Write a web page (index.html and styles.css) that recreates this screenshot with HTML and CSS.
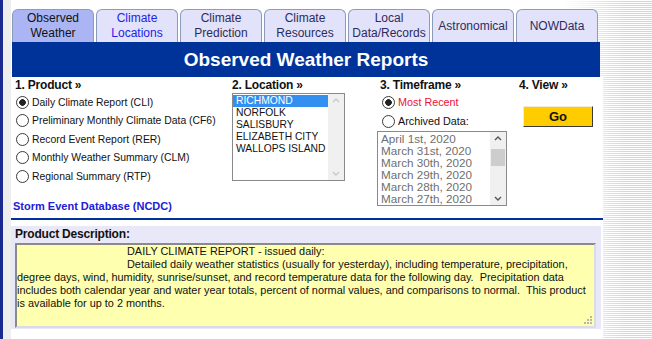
FILE: index.html
```html
<!DOCTYPE html>
<html lang="en">
<head>
  <meta charset="UTF-8">
  <title>Observed Weather Reports</title>
  <link rel="stylesheet" href="styles.css">
</head>
<body>
  <div class="frame">
    <div class="edge"></div>
    <div class="gutter"></div>
    <div class="page">
      <!-- Tab row -->
      <nav class="tabs">
        <a class="tab active">Observed<br>Weather</a>
        <a class="tab fresh">Climate<br>Locations</a>
        <a class="tab">Climate<br>Prediction</a>
        <a class="tab">Climate<br>Resources</a>
        <a class="tab">Local<br>Data/Records</a>
        <a class="tab">Astronomical</a>
        <a class="tab">NOWData</a>
      </nav>

      <div class="banner">Observed Weather Reports</div>

      <div class="main">
        <form class="picker">
          <!-- 1. Product -->
          <div class="col col-product">
            <div class="step">1. Product &raquo;</div>
            <label class="opt"><input type="radio" class="radio" name="product" checked>Daily Climate Report (CLI)</label>
            <label class="opt"><input type="radio" class="radio" name="product">Preliminary Monthly Climate Data (CF6)</label>
            <label class="opt"><input type="radio" class="radio" name="product">Record Event Report (RER)</label>
            <label class="opt"><input type="radio" class="radio" name="product">Monthly Weather Summary (CLM)</label>
            <label class="opt"><input type="radio" class="radio" name="product">Regional Summary (RTP)</label>
            <a class="storm">Storm Event Database (NCDC)</a>
          </div>

          <!-- 2. Location -->
          <div class="col col-location">
            <div class="step">2. Location &raquo;</div>
            <div class="listbox loc-list">
              <div class="items">
                <div class="item selected">RICHMOND</div>
                <div class="item">NORFOLK</div>
                <div class="item">SALISBURY</div>
                <div class="item">ELIZABETH CITY</div>
                <div class="item">WALLOPS ISLAND</div>
              </div>
              <div class="scroll disabled">
                <svg class="arrow" width="16" height="12" viewBox="0 0 16 12"><polyline points="5,8 8,5 11,8" fill="none" stroke="currentColor" stroke-width="1.4"/></svg>
                <div class="track"></div>
                <svg class="arrow" width="16" height="12" viewBox="0 0 16 12"><polyline points="5,4 8,7 11,4" fill="none" stroke="currentColor" stroke-width="1.4"/></svg>
              </div>
            </div>
          </div>

          <!-- 3. Timeframe -->
          <div class="col col-time">
            <div class="step">3. Timeframe &raquo;</div>
            <label class="opt"><input type="radio" class="radio" name="time" checked><span class="recent">Most Recent</span></label>
            <label class="opt opt-archive"><input type="radio" class="radio" name="time">Archived Data:</label>
            <div class="listbox date-list">
              <div class="items">
                <div class="item">April 1st, 2020</div>
                <div class="item">March 31st, 2020</div>
                <div class="item">March 30th, 2020</div>
                <div class="item">March 29th, 2020</div>
                <div class="item">March 28th, 2020</div>
                <div class="item">March 27th, 2020</div>
              </div>
              <div class="scroll">
                <svg class="arrow" width="16" height="12" viewBox="0 0 16 12"><polyline points="5,8 8,5 11,8" fill="none" stroke="currentColor" stroke-width="1.4"/></svg>
                <div class="track"><div class="thumb"></div></div>
                <svg class="arrow" width="16" height="12" viewBox="0 0 16 12"><polyline points="5,4 8,7 11,4" fill="none" stroke="currentColor" stroke-width="1.4"/></svg>
              </div>
            </div>
          </div>

          <!-- 4. View -->
          <div class="col col-view">
            <div class="step">4. View &raquo;</div>
            <button type="button" class="go">Go</button>
          </div>
        </form>

        <div class="desc">
          <div class="desc-title">Product Description:</div>
          <div class="desc-box">
            <span class="line indent">DAILY CLIMATE REPORT - issued daily:</span>
            <span class="line indent">Detailed daily weather statistics (usually for yesterday), including temperature, precipitation,</span>
            <span class="line">degree days, wind, humidity, sunrise/sunset, and record temperature data for the following day.  Precipitation data</span>
            <span class="line">includes both calendar year and water year totals, percent of normal values, and comparisons to normal.  This product</span>
            <span class="line">is available for up to 2 months.</span>
            <svg class="grip" width="10" height="10" viewBox="0 0 10 10">
              <rect x="7" y="1" width="2" height="2" fill="#b8b8a0"/>
              <rect x="4" y="4" width="2" height="2" fill="#b8b8a0"/>
              <rect x="7" y="4" width="2" height="2" fill="#b8b8a0"/>
              <rect x="1" y="7" width="2" height="2" fill="#b8b8a0"/>
              <rect x="4" y="7" width="2" height="2" fill="#b8b8a0"/>
              <rect x="7" y="7" width="2" height="2" fill="#b8b8a0"/>
            </svg>
          </div>
        </div>
      </div>
    </div>
  </div>
</body>
</html>
```

FILE: styles.css
```css
body {
  margin: 0;
  font-family: "Liberation Sans", Arial, sans-serif;
  color: #111;
  background:
    linear-gradient(to right, #fff 565px, rgba(255,255,255,0) 625px),
    repeating-linear-gradient(to bottom, #fff 0 1px, #d6d6d6 1px 2px);
}
.frame {
  display: flex;
  min-height: 100vh;
}
.edge {
  width: 3px;
  background: #1a2a8e;
}
.gutter {
  width: 8px;
  background: #eeeeee;
}
.page {
  width: 592px;
  display: flex;
  flex-direction: column;
}

/* tabs */
.tabs {
  display: flex;
  gap: 2px;
  padding: 9px 0 0 1px;
}
.tab {
  width: 82px;
  height: 33px;
  box-sizing: border-box;
  border: 1px solid #8b9bb8;
  border-bottom: none;
  border-radius: 6px 6px 0 0;
  background: #e2e2fa;
  color: #2c2c5c;
  font-size: 12px;
  line-height: 15px;
  text-align: center;
  display: flex;
  align-items: center;
  justify-content: center;
}
.tab.active {
  background: #acb5f3;
  color: #111;
}
.tab.fresh {
  color: #2222e6;
}

.banner {
  margin-left: 1px;
  width: 588px;
  height: 35px;
  background: #003399;
  color: #fff;
  font-weight: bold;
  font-size: 19px;
  line-height: 35px;
  text-align: center;
}

.main {
  background: #fff;
  flex: 1;
}

/* picker columns */
.picker {
  display: grid;
  grid-template-columns: 221px 145px 142px 1fr;
  height: 141px;
  border-bottom: 2px solid #003399;
}
.step {
  font-weight: bold;
  font-size: 12px;
  letter-spacing: -0.2px;
  line-height: 15px;
  margin-top: 1px;
}
.col-product {
  padding-left: 4px;
}
.opt {
  display: flex;
  align-items: center;
  gap: 3px;
  height: 18.5px;
  font-size: 10.4px;
  padding-left: 1px;
}
.radio {
  appearance: none;
  -webkit-appearance: none;
  width: 13px;
  height: 13px;
  margin: 0;
  border: 1px solid #3a3a3a;
  border-radius: 50%;
  background: #fff;
  flex: none;
}
.radio:checked {
  background: radial-gradient(circle, #222 0 3px, #fff 3.6px);
}
.storm {
  display: block;
  margin-top: 14px;
  margin-left: -2px;
  font-size: 11px;
  font-weight: bold;
  color: #2020d8;
}

.col-time {
  padding-left: 3px;
}
.col-time .opt {
  padding-left: 2px;
  font-size: 10.8px;
}
.recent {
  color: #ee1133;
}
.opt-archive {
  height: 19px;
}

/* list boxes */
.listbox {
  display: flex;
  border: 1px solid #8a8a8a;
  background: #fff;
}
.items {
  flex: 1;
  padding-top: 1px;
}
.item {
  line-height: 12px;
  padding-left: 3px;
  white-space: nowrap;
}
.item.selected {
  background: #3390f0;
  color: #fff;
}
.loc-list {
  width: 113px;
  height: 88px;
  box-sizing: border-box;
  font-size: 10.3px;
}
.date-list {
  width: 130px;
  height: 75px;
  box-sizing: border-box;
  margin-left: -3px;
  color: #6f6f6f;
  font-size: 11.7px;
}
.scroll {
  width: 16px;
  background: #f0f0f0;
  display: flex;
  flex-direction: column;
  color: #555;
}
.scroll.disabled {
  color: #c8c8c8;
}
.arrow {
  display: block;
}
.track {
  flex: 1;
  position: relative;
}
.thumb {
  position: absolute;
  left: 1px;
  right: 1px;
  top: 5px;
  height: 17px;
  background: #cdcdcd;
}

.go {
  display: block;
  margin: 13px 0 0 4px;
  width: 70px;
  height: 21px;
  padding: 0;
  background: #ffcc00;
  border: 1px solid;
  border-color: #f4eed0 #3a3a3a #3a3a3a #f4eed0;
  font-family: "Liberation Sans", Arial, sans-serif;
  font-weight: bold;
  font-size: 13px;
  color: #111;
}

/* description */
.desc {
  margin: 6px 2px 0 0;
  background: #e8e8f8;
  padding: 0 5px 1px 4px;
}
.desc-title {
  font-weight: bold;
  font-size: 12px;
  letter-spacing: -0.2px;
  line-height: 15px;
  padding-top: 1px;
}
.desc-box {
  position: relative;
  margin-top: 1px;
  height: 85px;
  box-sizing: border-box;
  border: 2px solid;
  border-color: #8a8a8a #dadae8 #dadae8 #8a8a8a;
  background: #ffffb0;
  font-size: 10.9px;
  line-height: 13px;
}
.line {
  display: block;
  white-space: pre;
}
.indent {
  padding-left: 110px;
}
.grip {
  position: absolute;
  right: 1px;
  bottom: 1px;
}
```
